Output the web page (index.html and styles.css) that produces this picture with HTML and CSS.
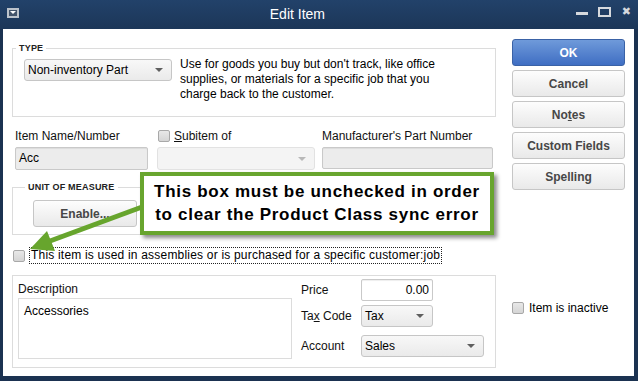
FILE: index.html
```html
<!doctype html>
<html lang="en">
<head>
    <meta charset="UTF-8">
    <title>Edit Item</title>
    <link rel="stylesheet" href="styles.css">
</head>
<body>

<div class="window">
    <div class="titlebar">
        <span class="sysmenu"><i></i></span>
        <span class="title">Edit Item</span>
        <span class="winbtns">
            <i class="w-min"></i>
            <i class="w-max"></i>
            <i class="w-close">&#10006;</i>
        </span>
    </div>

    <div class="content">
        <div class="main">

            <fieldset class="group type-group">
                <legend>TYPE</legend>
                <div class="type-row">
                    <div class="select type-select"><span>Non-inventory Part</span><b class="caret"></b></div>
                    <p class="type-desc">Use for goods you buy but don't track, like office<br>supplies, or materials for a specific job that you<br>charge back to the customer.</p>
                </div>
            </fieldset>

            <div class="fields-row">
                <div class="field f-name">
                    <label>Item Name/Number</label>
                    <div class="input input-gray">Acc</div>
                </div>
                <div class="field f-sub">
                    <label><span class="checkbox"></span><u>S</u>ubitem of</label>
                    <div class="select disabled"><span></span><b class="caret"></b></div>
                </div>
                <div class="field f-mpn">
                    <label>Manufacturer's Part Number</label>
                    <div class="input input-gray"></div>
                </div>
            </div>

            <fieldset class="group unit-group">
                <legend>UNIT OF MEASURE</legend>
                <button class="btn enable">Enable...</button>
            </fieldset>

            <div class="assembly-row">
                <span class="checkbox"></span>
                <span class="focus-label">This item is used in assemblies or is purchased for a specific customer:job</span>
            </div>

            <div class="sales-box">
                <div class="desc-col">
                    <label>Description</label>
                    <div class="textarea">Accessories</div>
                </div>
                <div class="price-col">
                    <div class="price-row">
                        <label>Price</label>
                        <div class="input price">0.00</div>
                    </div>
                    <div class="price-row">
                        <label>Ta<u>x</u> Code</label>
                        <div class="select tax"><span>Tax</span><b class="caret"></b></div>
                    </div>
                    <div class="price-row row-account">
                        <label>Account</label>
                        <div class="select account"><span>Sales</span><b class="caret"></b></div>
                    </div>
                </div>
            </div>

        </div>

        <div class="side">
            <button class="btn btn-ok">OK</button>
            <button class="btn">Cancel</button>
            <button class="btn">No<u>t</u>es</button>
            <button class="btn">Custom Fields</button>
            <button class="btn">Spellin<u>g</u></button>
            <div class="inactive-row"><span class="checkbox"></span>Item is inactive</div>
        </div>
    </div>

    <!-- annotation over the dialog -->
    <svg class="arrow" width="638" height="381" viewBox="0 0 638 381">
        <line x1="142" y1="207" x2="50" y2="241" stroke="#67a52d" stroke-width="5"/>
        <polygon points="30,249 47,231 55,251" fill="#67a52d"/>
    </svg>
    <div class="callout">This box must be unchecked in order<br>to clear the Product Class sync error</div>
</div>

</body>
</html>
```

FILE: styles.css
```css
*{
    margin: 0;
    padding: 0;
    box-sizing: border-box;
}

body,html{
    width:100%;
    height:100%;
    overflow: hidden;
}
body{
    font-family: "Liberation Sans", Arial, sans-serif;
    font-size: 12px;
    color: #111;
}

.window{
    position: relative;
    width: 638px;
    height: 381px;
    background-color: #1b3251;
    padding: 0 4px 5px 3px;
    display: flex;
    flex-direction: column;
}

/* title bar */
.titlebar{
    height: 29px;
    display: flex;
    align-items: center;
    padding: 0 7px 0 7px;
    background: linear-gradient(#22426a, #1c3658);
    margin: 0 -4px 0 -3px;
}
.sysmenu{
    width: 12px;
    height: 10px;
    border: 2px solid #bcc3cb;
    background-color: #43546a;
    display: flex;
    align-items: center;
    justify-content: center;
    margin-top: -4px;
}
.sysmenu i{
    width: 0;
    height: 0;
    border-left: 3px solid transparent;
    border-right: 3px solid transparent;
    border-top: 3px solid #fff;
}
.title{
    flex: 1;
    text-align: center;
    color: #fff;
    font-size: 14px;
    margin-top: -1px;
}
.winbtns{
    display: flex;
    align-self: flex-start;
    padding-top: 7px;
}
.winbtns i{
    display: block;
}
.w-min{
    width: 12px;
    height: 3px;
    background-color: #d6d9dd;
    margin-top: 5px;
}
.w-max{
    width: 13px;
    height: 10px;
    border: 2px solid #d6d9dd;
    margin-left: 10px;
}
.w-close{
    font-style: normal;
    font-family: "DejaVu Sans", sans-serif;
    font-size: 11px;
    line-height: 9px;
    color: #d6d9dd;
    margin-left: 11px;
}

/* dialog body */
.content{
    flex: 1;
    background-color: #fff;
    display: flex;
    padding-left: 9px;
}
.main{
    width: 484px;
    display: flex;
    flex-direction: column;
}

.group{
    border: 1px solid #dcdcdc;
    min-width: 0;
}
.group legend{
    font-size: 9px;
    font-weight: bold;
    line-height: 10px;
    color: #222;
    padding: 0 3px;
    margin-left: -8px;
    letter-spacing: .2px;
}

.type-group{
    margin-top: 14px;
    padding: 4px 10px 14px 11px;
}
.type-row{
    display: flex;
    align-items: flex-start;
}
.type-select{
    width: 148px;
    margin-top: 2px;
}
.type-desc{
    margin-left: 8px;
    line-height: 15px;
    color: #000;
}

.fields-row{
    display: flex;
    margin-top: 12px;
    padding-left: 3px;
}
.field label{
    display: flex;
    align-items: center;
    height: 14px;
    margin-bottom: 4px;
}
.field .checkbox{
    margin-right: 4px;
}
.f-name{
    width: 133px;
}
.f-name .input{
    height: 23px;
}
.f-sub{
    width: 158px;
    margin-left: 9px;
}
.f-sub label{
    margin-left: 1px;
}
.f-sub .select{
    height: 23px;
}
.f-mpn{
    width: 171px;
    margin-left: 7px;
}
.f-mpn .input{
    height: 22px;
}

.unit-group{
    width: 140px;
    margin-top: 12px;
    padding: 8px 0 7px 20px;
}
.enable{
    width: 104px;
    height: 27px;
    font-weight: normal;
    color: #333;
}

.assembly-row{
    display: flex;
    align-items: center;
    margin-top: 12px;
    height: 17px;
    padding-left: 1px;
}
.focus-label{
    margin-left: 4px;
    border: 1px dotted #222;
    line-height: 15px;
    padding: 0 1px;
    color: #000;
    letter-spacing: .2px;
}

.sales-box{
    display: flex;
    margin-top: 11px;
    border: 1px solid #dcdcdc;
    padding: 3px 10px 8px 5px;
}
.desc-col{
    width: 274px;
}
.desc-col label{
    display: block;
    margin-top: 3px;
    line-height: 14px;
}
.textarea{
    margin-top: 2px;
    height: 61px;
    border: 1px solid #dcdcdc;
    padding: 5px 5px;
    color: #000;
}
.price-col{
    margin-left: 9px;
}
.price-row{
    display: flex;
    align-items: center;
    height: 22px;
    margin-bottom: 4px;
}
.price-row label{
    width: 60px;
}
.row-account{
    margin-top: 8px;
    margin-bottom: 0;
}
.price{
    width: 72px;
    height: 22px;
    background-color: #fff;
    border-color: #a8a8a8;
    text-align: right;
    padding-right: 4px;
    box-shadow: none;
}
.tax{
    width: 72px;
}
.account{
    width: 123px;
}

/* controls */
.input{
    border: 1px solid #c9c9c9;
    border-radius: 2px;
    line-height: 20px;
    padding: 0 3px;
    color: #000;
    box-shadow: inset 0 1px 1px rgba(0,0,0,.07);
}
.input-gray{
    background-color: #ececec;
}

.select{
    height: 22px;
    display: flex;
    align-items: center;
    justify-content: space-between;
    padding: 0 8px 0 3px;
    border: 1px solid #c6c6c6;
    border-radius: 3px;
    background: linear-gradient(#f8f8f8, #eaeaea);
    color: #000;
}
.caret{
    width: 0;
    height: 0;
    border-left: 4px solid transparent;
    border-right: 4px solid transparent;
    border-top: 4px solid #5f5f5f;
}
.select.disabled{
    background: #f4f4f4;
    border-color: #e2e2e2;
}
.select.disabled .caret{
    border-top-color: #b8b8b8;
}

.checkbox{
    display: inline-block;
    flex: none;
    width: 12px;
    height: 12px;
    border: 1px solid #a8a8a8;
    border-radius: 2px;
    background: linear-gradient(#e8e8e8, #d5d5d5);
}

.btn{
    display: block;
    font-family: inherit;
    font-size: 12px;
    font-weight: bold;
    color: #474747;
    border: 1px solid #c6c6c6;
    border-radius: 3px;
    background: linear-gradient(#fdfdfd, #e9e9e9);
}

/* right column */
.side{
    width: 113px;
    margin-left: 16px;
    padding-top: 10px;
    display: flex;
    flex-direction: column;
    gap: 4px;
}
.side .btn{
    height: 27px;
}
.btn-ok{
    color: #fff;
    border-color: #3a62a6;
    background: linear-gradient(#6f9ada, #3f6ec3);
}
.inactive-row{
    display: flex;
    align-items: center;
    height: 16px;
    margin-top: 106px;
    color: #000;
}
.inactive-row .checkbox{
    margin-right: 5px;
}

/* annotation */
.arrow{
    position: absolute;
    left: 0;
    top: 0;
    pointer-events: none;
}
.callout{
    position: absolute;
    left: 140px;
    top: 172px;
    width: 354px;
    height: 63px;
    border: 4px solid #68a52e;
    background-color: #fff;
    box-shadow: 3px 3px 4px rgba(0,0,0,.45);
    padding-top: 4px;
    text-align: center;
    font-size: 17px;
    font-weight: bold;
    line-height: 23px;
    letter-spacing: .7px;
    color: #000;
}
```
